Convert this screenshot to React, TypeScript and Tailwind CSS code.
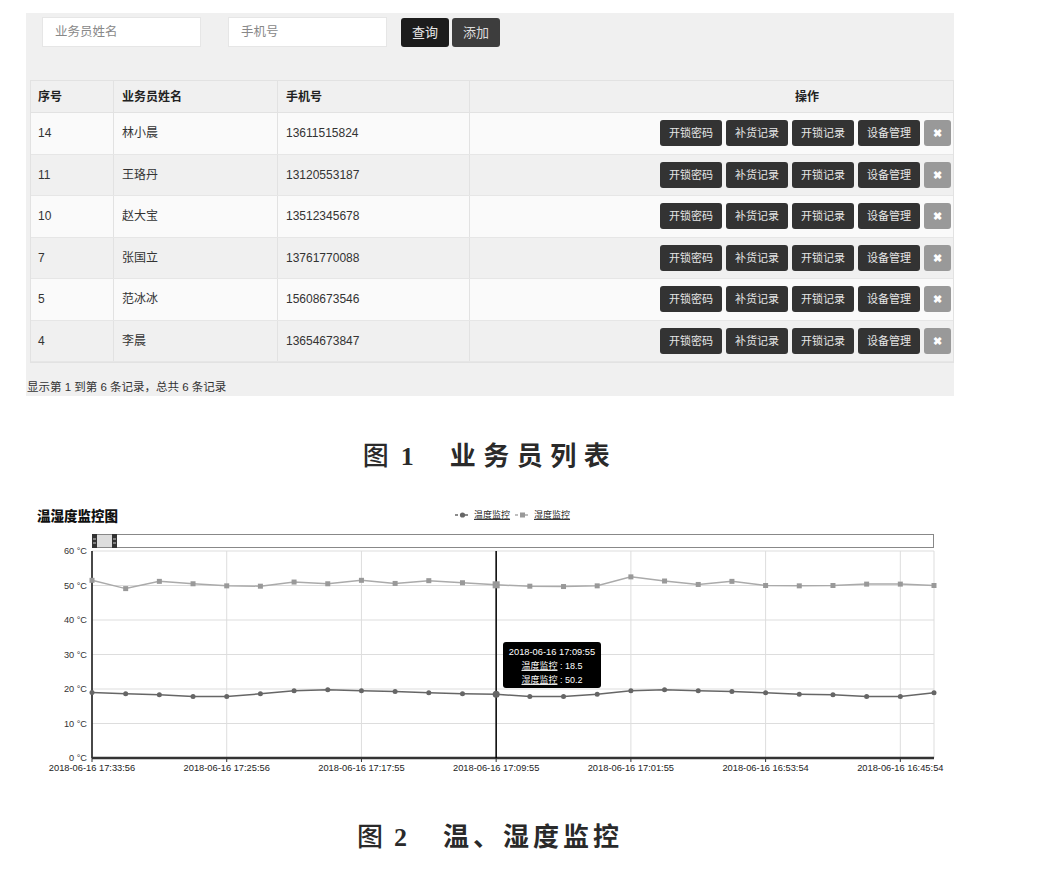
import React from 'react';

const rows = [
  { id: '14', name: '林小晨', phone: '13611515824' },
  { id: '11', name: '王珞丹', phone: '13120553187' },
  { id: '10', name: '赵大宝', phone: '13512345678' },
  { id: '7', name: '张国立', phone: '13761770088' },
  { id: '5', name: '范冰冰', phone: '15608673546' },
  { id: '4', name: '李晨', phone: '13654673847' },
];

const actions = ['开锁密码', '补货记录', '开锁记录', '设备管理'];

const temps = [
  19.0, 18.6, 18.3, 17.8, 17.8, 18.6, 19.5, 19.8, 19.5, 19.3, 18.9, 18.6, 18.5, 17.8, 17.8, 18.5,
  19.5, 19.8, 19.5, 19.3, 18.9, 18.5, 18.3, 17.8, 17.8, 18.9,
];
const hums = [
  51.5, 49.1, 51.2, 50.5, 49.9, 49.8, 51.0, 50.5, 51.5, 50.6, 51.4, 50.8, 50.2, 49.8, 49.7, 49.9,
  52.5, 51.3, 50.3, 51.2, 50.0, 49.9, 50.0, 50.4, 50.4, 50.0,
];
const xLabels = [
  '2018-06-16 17:33:56',
  '2018-06-16 17:25:56',
  '2018-06-16 17:17:55',
  '2018-06-16 17:09:55',
  '2018-06-16 17:01:55',
  '2018-06-16 16:53:54',
  '2018-06-16 16:45:54',
];

const X0 = 92;
const X1 = 934;
const YT = 551;
const YB = 758;
const step = (X1 - X0) / 25;
const px = (i: number) => X0 + i * step;
const py = (v: number) => YB - (v / 60) * (YB - YT);

function Chart() {
  const tPts = temps.map((v, i) => `${px(i)},${py(v)}`).join(' ');
  const hPts = hums.map((v, i) => `${px(i)},${py(v)}`).join(' ');
  return (
    <svg
      width="960"
      height="280"
      viewBox="0 500 960 280"
      className="block font-['Liberation_Sans','Noto_Sans_CJK_SC',sans-serif]"
    >
      <text x="37" y="521" fontSize="13.5" fontWeight="900" fill="#111">
        温湿度监控图
      </text>

      {/* legend */}
      <line x1="455" y1="515" x2="470" y2="515" stroke="#666" strokeWidth="1.5" strokeDasharray="3 2" />
      <circle cx="462.5" cy="515" r="2.6" fill="#666" />
      <text x="474" y="518" fontSize="9" fill="#222" textDecoration="underline">
        温度监控
      </text>
      <line x1="515" y1="515" x2="530" y2="515" stroke="#aaa" strokeWidth="1.5" strokeDasharray="3 2" />
      <rect x="520" y="512.5" width="5" height="5" fill="#999" />
      <text x="534" y="518" fontSize="9" fill="#222" textDecoration="underline">
        湿度监控
      </text>

      {/* data zoom */}
      <rect x="92.5" y="534.5" width="841" height="13" fill="#fff" stroke="#888" />
      <rect x="97" y="535" width="15" height="12" fill="#ddd" />
      <rect x="92" y="534" width="5" height="14" fill="#333" />
      <rect x="112" y="534" width="5" height="14" fill="#333" />
      <line x1="93" y1="539" x2="96" y2="539" stroke="#ccc" />
      <line x1="93" y1="543" x2="96" y2="543" stroke="#ccc" />
      <line x1="113" y1="539" x2="116" y2="539" stroke="#ccc" />
      <line x1="113" y1="543" x2="116" y2="543" stroke="#ccc" />

      {/* grid */}
      {[60, 50, 40, 30, 20, 10].map((v) => (
        <line key={v} x1={X0} y1={py(v)} x2={X1} y2={py(v)} stroke="#ddd" strokeWidth="1" />
      ))}
      {xLabels.map((_, i) => (
        <line key={i} x1={px(i * 4)} y1={YT} x2={px(i * 4)} y2={YB} stroke="#ddd" strokeWidth="1" />
      ))}
      <line x1={X1} y1={YT} x2={X1} y2={YB} stroke="#ddd" strokeWidth="1" />

      {[60, 50, 40, 30, 20, 10, 0].map((v) => (
        <text key={v} x="87" y={py(v) + 3} fontSize="9.2" fill="#333" textAnchor="end">
          {v} °C
        </text>
      ))}

      {/* axes */}
      <line x1={X0} y1={YT} x2={X0} y2={YB} stroke="#111" strokeWidth="1.5" />
      <line x1={X0} y1={YB} x2={X1} y2={YB} stroke="#333" strokeWidth="2.5" />
      {xLabels.map((l, i) => (
        <g key={l}>
          <line x1={px(i * 4)} y1={YB} x2={px(i * 4)} y2={YB + 4} stroke="#333" strokeWidth="1" />
          <text x={px(i * 4)} y="771" fontSize="9.3" fill="#222" textAnchor="middle">
            {l}
          </text>
        </g>
      ))}

      {/* pointer line */}
      <line x1={px(12)} y1={YT} x2={px(12)} y2={YB} stroke="#000" strokeWidth="1.5" />

      {/* series */}
      <polyline points={hPts} fill="none" stroke="#aaa" strokeWidth="1.5" />
      {hums.map((v, i) => (
        <rect
          key={i}
          x={px(i) - (i === 12 ? 3.5 : 2.5)}
          y={py(v) - (i === 12 ? 3.5 : 2.5)}
          width={i === 12 ? 7 : 5}
          height={i === 12 ? 7 : 5}
          fill="#999"
        />
      ))}
      <polyline points={tPts} fill="none" stroke="#666" strokeWidth="1.5" />
      {temps.map((v, i) => (
        <circle key={i} cx={px(i)} cy={py(v)} r={i === 12 ? 3.5 : 2.5} fill="#666" />
      ))}

      {/* tooltip */}
      <rect x="503" y="642" width="98" height="46" rx="3" fill="#000" />
      <text x="552" y="655" fontSize="9.3" fill="#fff" textAnchor="middle">
        2018-06-16 17:09:55
      </text>
      <text x="552" y="669" fontSize="9" fill="#fff" textAnchor="middle">
        <tspan textDecoration="underline">温度监控</tspan> : 18.5
      </text>
      <text x="552" y="683" fontSize="9" fill="#fff" textAnchor="middle">
        <tspan textDecoration="underline">湿度监控</tspan> : 50.2
      </text>
    </svg>
  );
}

export default function App() {
  return (
    <div className="w-[1057px] h-[873px] bg-white font-['Liberation_Sans','Noto_Sans_CJK_SC',sans-serif] text-[#333]">
      {/* panel */}
      <div className="mt-[13px] ml-[26px] w-[928px] h-[383px] bg-[#f0f0f0] flex flex-col">
        <div className="flex items-start mt-[4px] ml-[16px] h-[30px]">
          <div className="w-[159px] h-[30px] bg-white border border-[#e6e6e6] flex items-center pl-[12px] text-[12.5px] text-[#888]">
            业务员姓名
          </div>
          <div className="ml-[27px] w-[159px] h-[30px] bg-white border border-[#e6e6e6] flex items-center pl-[12px] text-[12.5px] text-[#888]">
            手机号
          </div>
          <div className="ml-[14px] mt-[1px] w-[48px] h-[29px] bg-[#1c1c1c] rounded-[3px] flex items-center justify-center text-[13px] text-[#e8e8e8]">
            查询
          </div>
          <div className="ml-[3px] mt-[1px] w-[48px] h-[29px] bg-[#3d3d3d] rounded-[3px] flex items-center justify-center text-[13px] text-[#ddd]">
            添加
          </div>
        </div>

        <div className="mt-[33px] ml-[4px] w-[924px] border border-[#e2e2e2] text-[12px]">
          <div className="flex h-[32px] bg-[#f0f0f0] font-bold text-[#222] border-b border-[#e2e2e2]">
            <div className="w-[83px] pl-[7px] flex items-center border-r border-[#e2e2e2]">序号</div>
            <div className="w-[164px] pl-[8px] flex items-center border-r border-[#e2e2e2]">业务员姓名</div>
            <div className="w-[192px] pl-[8px] flex items-center border-r border-[#e2e2e2]">手机号</div>
            <div className="flex-1 flex items-center pl-[325px]">操作</div>
          </div>
          {rows.map((r, i) => (
            <div
              key={r.id}
              className={`flex h-[41.5px] border-b border-[#e6e6e6] ${i % 2 === 0 ? 'bg-[#fafafa]' : 'bg-[#f0f0f0]'}`}
            >
              <div className="w-[83px] pl-[7px] flex items-center border-r border-[#e2e2e2]">{r.id}</div>
              <div className="w-[164px] pl-[8px] flex items-center border-r border-[#e2e2e2]">{r.name}</div>
              <div className="w-[192px] pl-[8px] flex items-center border-r border-[#e2e2e2]">{r.phone}</div>
              <div className="flex-1 flex items-center justify-end gap-[4px] pr-[2px]">
                {actions.map((a) => (
                  <div
                    key={a}
                    className="w-[62px] h-[26px] bg-[#333] rounded-[3px] flex items-center justify-center text-[11px] text-[#e6e6e6]"
                  >
                    {a}
                  </div>
                ))}
                <div className="w-[27px] h-[26px] bg-[#999] rounded-[3px] flex items-center justify-center text-[11px] font-bold text-white">
                  ✖
                </div>
              </div>
            </div>
          ))}
        </div>

        <div className="mt-[16px] ml-[1px] text-[11.5px] text-[#333]">显示第 1 到第 6 条记录，总共 6 条记录</div>
      </div>

      {/* caption 1 */}
      <div className="ml-[26px] w-[928px] h-[104px] pt-[41px] flex justify-center items-start">
        <div className="h-[34px] leading-[34px] text-[26px] text-[#2a2a2a] flex items-baseline">
          <span className="font-['Noto_Sans_CJK_SC',sans-serif] font-medium">图</span>
          <span className="ml-[12px] font-['Liberation_Serif',serif] font-bold">1</span>
          <span className="ml-[36px] font-['Noto_Sans_CJK_SC',sans-serif] font-bold tracking-[7.5px]">业务员列表</span>
        </div>
      </div>

      <Chart />

      {/* caption 2 */}
      <div className="ml-[26px] w-[928px] h-[93px] pt-[38px] flex justify-center items-start">
        <div className="h-[34px] leading-[34px] text-[26px] text-[#2a2a2a] flex items-baseline">
          <span className="font-['Noto_Sans_CJK_SC',sans-serif] font-medium">图</span>
          <span className="ml-[11px] font-['Liberation_Serif',serif] font-bold">2</span>
          <span className="ml-[36px] font-['Noto_Sans_CJK_SC',sans-serif] font-bold tracking-[4px]">温、湿度监控</span>
        </div>
      </div>
    </div>
  );
}
